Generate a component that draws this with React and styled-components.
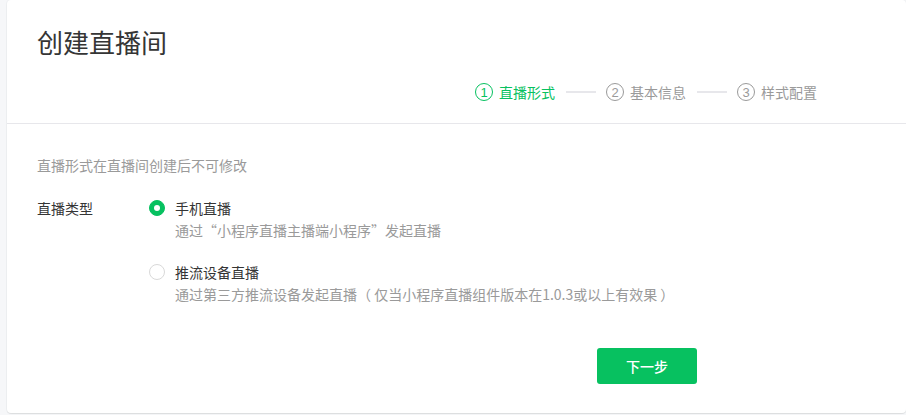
import React, { useState } from "react";
import styled, { createGlobalStyle } from "styled-components";

const Global = createGlobalStyle`
  html, body { margin: 0; padding: 0; }
  body {
    background: #f6f7f9;
    font-family: "Noto Sans CJK SC", "Noto Sans", sans-serif;
    overflow: hidden;
  }
`;

const Page = styled.div`
  width: 906px;
  height: 415px;
  padding-left: 7px;
  box-sizing: border-box;
  overflow: hidden;
`;

const Card = styled.div`
  width: 899px;
  height: 413px;
  background: #fff;
  border-radius: 4px;
  box-shadow: 0 1px 1px rgba(0, 0, 0, 0.08), 0 0 0 1px #eef0f2;
  display: flex;
  flex-direction: column;
`;

const Header = styled.div`
  padding: 24px 89px 19px 30px;
  border-bottom: 1px solid #e7e7eb;
  display: flex;
  flex-direction: column;
`;

const Title = styled.h1`
  margin: 0;
  font-size: 26px;
  line-height: 36px;
  font-weight: 400;
  color: #353535;
`;

const Steps = styled.div`
  margin-top: 20px;
  height: 24px;
  display: flex;
  justify-content: flex-end;
  align-items: center;
`;

const Step = styled.div`
  display: flex;
  align-items: center;
  gap: 6px;
  color: ${(p) => (p.$active ? "#07c160" : "#9a9a9a")};
  font-size: 14px;
`;

const StepNum = styled.span`
  width: 16px;
  height: 16px;
  border: 1px solid currentColor;
  border-radius: 50%;
  display: inline-flex;
  align-items: center;
  justify-content: center;
  font-size: 13px;
  line-height: 1;
  font-family: "Liberation Sans", sans-serif;
`;

const StepLine = styled.span`
  width: 30px;
  height: 2px;
  background: #e7e7eb;
  margin: 0 10px 0 11px;
`;

const Body = styled.div`
  padding: 31px 30px 0 30px;
  display: flex;
  flex-direction: column;
`;

const Hint = styled.p`
  margin: 0;
  font-size: 14px;
  line-height: 20px;
  color: #9a9a9a;
`;

const FormRow = styled.div`
  margin-top: 22px;
  display: flex;
`;

const Label = styled.div`
  width: 112px;
  font-size: 14px;
  line-height: 22px;
  color: #353535;
`;

const Options = styled.div`
  display: flex;
  flex-direction: column;
  gap: 20px;
`;

const Option = styled.label`
  display: flex;
  align-items: flex-start;
  gap: 10px;
  cursor: pointer;
`;

const Radio = styled.span`
  width: 16px;
  height: 16px;
  margin-top: 3px;
  border-radius: 50%;
  box-sizing: border-box;
  flex-shrink: 0;
  background: ${(p) => (p.$checked ? "#07c160" : "#fff")};
  border: 1px solid ${(p) => (p.$checked ? "#07c160" : "#d9d9d9")};
  display: flex;
  align-items: center;
  justify-content: center;
  &::after {
    content: "";
    width: 6px;
    height: 6px;
    border-radius: 50%;
    background: #fff;
    display: ${(p) => (p.$checked ? "block" : "none")};
  }
`;

const OptionText = styled.div`
  display: flex;
  flex-direction: column;
`;

const OptionTitle = styled.span`
  font-size: 14px;
  line-height: 22px;
  color: #353535;
`;

const OptionDesc = styled.span`
  font-size: 14px;
  line-height: 22px;
  color: #9a9a9a;
`;

const Footer = styled.div`
  padding-left: 590px;
  margin-top: 43px;
`;

const Button = styled.button`
  width: 100px;
  height: 36px;
  border: none;
  border-radius: 3px;
  background: #07c160;
  color: #fff;
  font-family: inherit;
  font-size: 14px;
  font-weight: 500;
  cursor: pointer;
`;

const options = [
  { title: "手机直播", desc: "通过“小程序直播主播端小程序”发起直播" },
  {
    title: "推流设备直播",
    desc: "通过第三方推流设备发起直播（ 仅当小程序直播组件版本在1.0.3或以上有效果 ）",
  },
];

export default function App() {
  const [sel, setSel] = useState(0);
  return (
    <>
      <Global />
      <Page>
        <Card>
          <Header>
            <Title>创建直播间</Title>
            <Steps>
              <Step $active>
                <StepNum>1</StepNum>直播形式
              </Step>
              <StepLine />
              <Step>
                <StepNum>2</StepNum>基本信息
              </Step>
              <StepLine />
              <Step>
                <StepNum>3</StepNum>样式配置
              </Step>
            </Steps>
          </Header>
          <Body>
            <Hint>直播形式在直播间创建后不可修改</Hint>
            <FormRow>
              <Label>直播类型</Label>
              <Options>
                {options.map((o, i) => (
                  <Option key={i} onClick={() => setSel(i)}>
                    <Radio $checked={sel === i} />
                    <OptionText>
                      <OptionTitle>{o.title}</OptionTitle>
                      <OptionDesc>{o.desc}</OptionDesc>
                    </OptionText>
                  </Option>
                ))}
              </Options>
            </FormRow>
          </Body>
          <Footer>
            <Button>下一步</Button>
          </Footer>
        </Card>
      </Page>
    </>
  );
}
